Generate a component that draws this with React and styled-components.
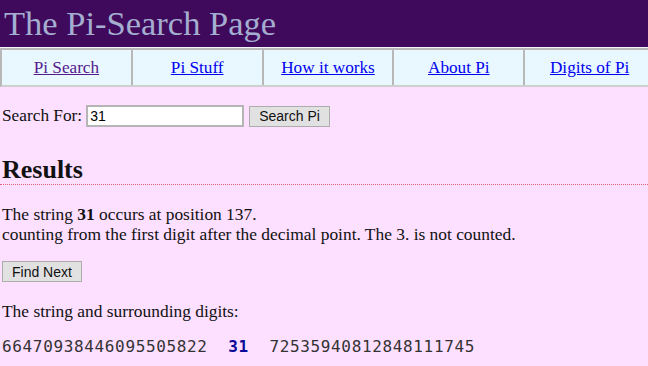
import React from "react";
import styled, { createGlobalStyle } from "styled-components";

const Global = createGlobalStyle`
  html, body { margin: 0; padding: 0; background: #fddfff; }
  body { font-family: "Liberation Serif", "Times New Roman", serif; font-size: 16px; color: #111; }
`;

const Page = styled.div`
  width: 648px;
  min-height: 366px;
  background: #fddfff;
  overflow: hidden;
`;

const Header = styled.h1`
  margin: 0;
  height: 47px;
  background: #400a5c;
  color: #a4aed0;
  font-family: "Liberation Serif", serif;
  font-weight: normal;
  font-size: 34.5px;
  line-height: 47px;
  padding-left: 4px;
  border-bottom: 1px solid #f4f4ff;
`;

const Nav = styled.nav`
  display: grid;
  grid-template-columns: repeat(5, 1fr);
  width: 654px;
  background: #e9f7ff;
  border-top: 2px solid #b8b8b8;
  border-bottom: 2px solid #cfcfcf;
  border-left: 2px solid #b8b8b8;
  height: 35px;
`;

const NavCell = styled.div`
  display: flex;
  align-items: center;
  justify-content: center;
  border-right: 2px solid #b8b8b8;
`;

const NavLink = styled.a`
  color: ${(p) => (p.$visited ? "#551a8b" : "#0000ee")};
  text-decoration: underline;
  font-size: 17.2px;
  font-family: "Liberation Serif", serif;
`;

const Content = styled.main`
  padding: 0 2px;
`;

const SearchRow = styled.form`
  display: flex;
  align-items: center;
  margin-top: 17px;
  height: 24px;
  font-size: 17.3px;
`;

const Input = styled.input`
  margin-left: 4px;
  width: 150px;
  height: 18px;
  border: 2px solid #b5b5b5;
  background: #fff;
  padding: 0 2px;
  font-family: "Liberation Sans", Arial, sans-serif;
  font-size: 14px;
`;

const Button = styled.button`
  font-family: "Liberation Sans", Arial, sans-serif;
  font-size: 14px;
  color: #111;
  background: #e1e1e1;
  border: 1px solid #adadad;
  border-radius: 0;
  padding: 0 9px;
  height: 21px;
  margin-left: ${(p) => p.$ml || 0}px;
  margin-top: ${(p) => p.$mt || 0}px;
`;

const Heading = styled.h2`
  margin: 28px -2px 0 -2px;
  font-size: 26px;
  font-weight: bold;
  font-family: "Liberation Serif", serif;
  line-height: 28px;
  padding: 0 0 0 2px;
  border-bottom: 1px dotted #e0607a;
`;

const Para = styled.p`
  margin: ${(p) => p.$mt || 0}px 0 0;
  font-size: 17.4px;
  line-height: 20px;
`;

const Digits = styled.div`
  margin-top: 16px;
  font-family: "DejaVu Sans Mono", "Liberation Mono", monospace;
  font-size: 16px;
  letter-spacing: 0.65px;
  color: #333;
  white-space: pre;
`;

const Hit = styled.b`
  color: #0a0a9a;
`;

export default function App() {
  const links = ["Pi Search", "Pi Stuff", "How it works", "About Pi", "Digits of Pi"];
  return (
    <Page>
      <Global />
      <Header>The Pi-Search Page</Header>
      <Nav>
        {links.map((l, i) => (
          <NavCell key={l}>
            <NavLink href="#" $visited={i === 0}>{l}</NavLink>
          </NavCell>
        ))}
      </Nav>
      <Content>
        <SearchRow onSubmit={(e) => e.preventDefault()}>
          Search For:
          <Input defaultValue="31" />
          <Button $ml={5}>Search Pi</Button>
        </SearchRow>
        <Heading>Results</Heading>
        <Para $mt={19}>
          The string <b>31</b> occurs at position 137.
          <br />
          counting from the first digit after the decimal point. The 3. is not counted.
        </Para>
        <Button $mt={17}>Find Next</Button>
        <Para $mt={19}>The string and surrounding digits:</Para>
        <Digits>
          {"66470938446095505822  "}
          <Hit>31</Hit>
          {"  72535940812848111745"}
        </Digits>
      </Content>
    </Page>
  );
}
